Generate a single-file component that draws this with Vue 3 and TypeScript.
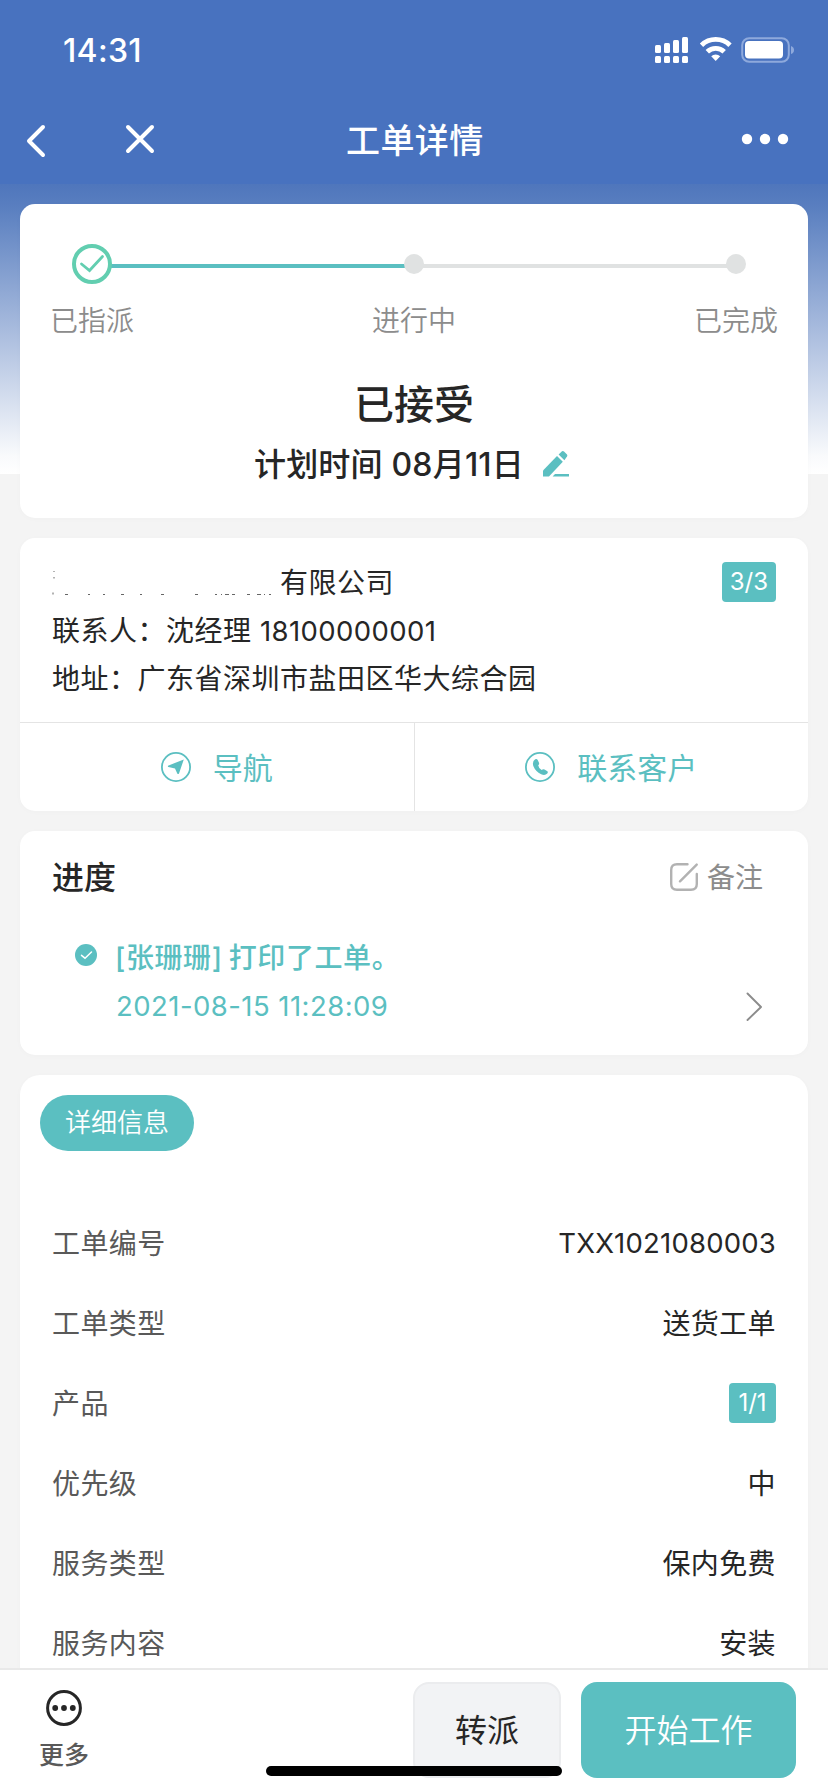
<script setup lang="ts">
interface Step {
  label: string
  done: boolean
}
interface DetailRow {
  label: string
  value: string
  kind?: 'tag' | 'code'
}

const steps: Step[] = [
  { label: '已指派', done: true },
  { label: '进行中', done: false },
  { label: '已完成', done: false },
]

const rows: DetailRow[] = [
  { label: '工单编号', value: 'TXX1021080003', kind: 'code' },
  { label: '工单类型', value: '送货工单' },
  { label: '产品', value: '1/1', kind: 'tag' },
  { label: '优先级', value: '中' },
  { label: '服务类型', value: '保内免费' },
  { label: '服务内容', value: '安装' },
]
</script>

<template>
  <div class="screen">
    <header class="top">
      <div class="status">
        <span class="clock">14:31</span>
        <svg class="status-icons" width="142" height="28" viewBox="0 0 142 28" fill="#fff">
          <rect x="0" y="9" width="6" height="8" rx="1.5" />
          <rect x="9" y="7" width="6" height="10" rx="1.5" />
          <rect x="18" y="4" width="6" height="13" rx="1.5" />
          <rect x="27" y="1" width="6" height="16" rx="1.5" />
          <rect x="0" y="20" width="6" height="7" rx="1.5" />
          <rect x="9" y="20" width="6" height="7" rx="1.5" />
          <rect x="18" y="20" width="6" height="7" rx="1.5" />
          <rect x="27" y="20" width="6" height="7" rx="1.5" />
          <g fill="none" stroke="#fff" stroke-width="4.8">
            <path d="M46.500 9.200 A20.500 20.500 0 0 1 75 9.200" />
            <path d="M52.300 15.800 A12 12 0 0 1 69.200 15.800" />
          </g>
          <path d="M56.200 20.200 A6.500 6.500 0 0 1 65.200 20.200 L60.700 25 Z" />
          <rect x="87.200" y="2.200" width="46.600" height="23.600" rx="7" fill="none" stroke="#8ea9dc" stroke-width="2" />
          <rect x="90" y="5" width="38" height="17.500" rx="4" />
          <path d="M136 10 Q139 11 139 14 Q139 17 136 18 Z" fill="#8ea9dc" />
        </svg>
      </div>
      <nav class="nav">
        <svg class="back" width="22" height="36" viewBox="0 0 22 36" fill="none" stroke="#fff" stroke-width="4" stroke-linecap="round" stroke-linejoin="round">
          <path d="M18 4 L4 18 L18 32" />
        </svg>
        <svg class="close" width="32" height="32" viewBox="0 0 32 32" fill="none" stroke="#fff" stroke-width="4" stroke-linecap="round">
          <path d="M4 4 L28 28 M28 4 L4 28" />
        </svg>
        <h1 class="nav-title">工单详情</h1>
        <svg class="dots" width="48" height="12" viewBox="0 0 48 12" fill="#fff">
          <circle cx="6" cy="6" r="5.200" />
          <circle cx="24" cy="6" r="5.200" />
          <circle cx="42" cy="6" r="5.200" />
        </svg>
      </nav>
    </header>

    <main class="body">
      <section class="card summary">
        <ol class="steps">
          <li v-for="(s, i) in steps" :key="s.label" class="step">
            <span v-if="i < steps.length - 1" class="track" :class="{ active: s.done }"></span>
            <span class="marker">
              <svg v-if="s.done" width="40" height="40" viewBox="0 0 40 40" fill="none" stroke="#62ceb0">
                <circle cx="20" cy="20" r="18" fill="#fff" stroke-width="4" />
                <path d="M9.500 20 L17.500 26.500 L30.500 12.500" stroke-width="2.800" stroke-linecap="round" />
              </svg>
              <i v-else class="dot"></i>
            </span>
            <span class="step-label">{{ s.label }}</span>
          </li>
        </ol>
        <h2 class="state">已接受</h2>
        <div class="plan">
          <span>计划时间 08月11日</span>
          <svg width="28" height="28" viewBox="0 0 28 28" fill="#5bbfc1">
            <path d="M1 26.500 V20.500 L15 6 L20.800 11.800 L7 26.500 Z" />
            <path d="M16.600 4.400 L20 1.200 Q21 .5 22 1.400 L25 4.600 Q25.700 5.600 25 6.600 L22.400 10.200 Z" />
            <path d="M13 24 H27 V26.500 H10.600 Z" />
          </svg>
        </div>
      </section>

      <section class="card customer">
        <div class="customer-info">
          <div class="line company">
            <span class="company-name">
              <svg class="masked" width="228" height="30" viewBox="0 0 228 30" stroke="#666" stroke-width="1">
                <path d="M2 3 v1 M2 9 v1.500" />
                <path d="M1 24.500 v2 M13 26.500 h3 M36 26.500 h2 M51 26.500 h2 M69 26.500 h3 M88 26.500 h2 M109 26.500 h3 M143 26.500 h3 M163 26.500 h2 M169 26.500 h1 M173 26.500 h4 M180 26.500 h3 M195 26.500 h3 M205 26.500 h4 M212 26.500 h1 M217 26.500 h2" />
              </svg>
              <span>有限公司</span>
            </span>
            <span class="tag">3/3</span>
          </div>
          <div class="line">联系人：沈经理 <span class="phone">18100000001</span></div>
          <div class="line">地址：广东省深圳市盐田区华大综合园</div>
        </div>
        <div class="actions">
          <button class="action" type="button">
            <svg width="30" height="30" viewBox="0 0 30 30">
              <circle cx="15" cy="15" r="14.100" fill="none" stroke="#5bbfc1" stroke-width="1.800" />
              <path d="M22.800 7.400 L7 13.700 Q6.600 14.500 7.400 14.900 L14 16.500 L16.400 21.800 Q17.200 22.500 18 21.600 Z" fill="#5bbfc1" />
            </svg>
            <span>导航</span>
          </button>
          <button class="action" type="button">
            <svg width="30" height="30" viewBox="0 0 30 30">
              <circle cx="15" cy="15" r="14.100" fill="none" stroke="#5bbfc1" stroke-width="1.800" />
              <path d="M10.200 7.300 Q11.800 6.400 12.700 8 L14 10.700 Q14.600 12 13.200 13.200 Q13.500 16 16.600 17.900 Q18.300 16.700 19.500 17.600 L22 19 Q23.500 20 22.300 21.500 Q20 24 16.200 22.300 Q10.500 19.500 8.300 14 Q7 9.500 10.200 7.300 Z" fill="#5bbfc1" />
            </svg>
            <span>联系客户</span>
          </button>
        </div>
      </section>

      <section class="card progress">
        <div class="progress-head">
          <h3 class="progress-title">进度</h3>
          <span class="remark">
            <svg width="28" height="28" viewBox="0 0 28 28" fill="none" stroke="#b2b2b2" stroke-width="2.400" stroke-linecap="round">
              <path d="M17.500 1.300 H7 Q1.200 1.300 1.200 7 V21 Q1.200 26.800 7 26.800 H21 Q26.800 26.800 26.800 21 V11" />
              <path d="M10 18.300 L26.700 1.600" />
            </svg>
            <span>备注</span>
          </span>
        </div>
        <div class="event">
          <svg class="event-dot" width="22" height="22" viewBox="0 0 22 22">
            <circle cx="11" cy="11" r="11" fill="#5bbfc1" />
            <path d="M6.500 11.300 L10 14.200 L16.500 8" fill="none" stroke="#fff" stroke-width="1.500" stroke-linecap="round" />
          </svg>
          <div class="event-body">
            <div class="event-text">[张珊珊] 打印了工单。</div>
            <div class="event-time">2021-08-15 11:28:09</div>
          </div>
          <svg class="chevron" width="17" height="30" viewBox="0 0 17 30" fill="none" stroke="#8c8c8c" stroke-width="1.900" stroke-linecap="round" stroke-linejoin="round">
            <path d="M1.500 1.500 L15 15 L1.500 28" />
          </svg>
        </div>
      </section>

      <section class="card details">
        <span class="pill">详细信息</span>
        <dl class="rows">
          <div v-for="r in rows" :key="r.label" class="row">
            <dt>{{ r.label }}</dt>
            <dd :class="r.kind">{{ r.value }}</dd>
          </div>
        </dl>
      </section>
    </main>

    <footer class="bar">
      <div class="more">
        <svg width="36" height="36" viewBox="0 0 36 36" fill="#262626">
          <circle cx="18" cy="18" r="16.400" fill="none" stroke="#262626" stroke-width="3" />
          <circle cx="9.200" cy="18" r="2.900" />
          <circle cx="18" cy="18" r="2.900" />
          <circle cx="26.800" cy="18" r="2.900" />
        </svg>
        <span>更多</span>
      </div>
      <button class="btn plain" type="button">转派</button>
      <button class="btn primary" type="button">开始工作</button>
      <i class="home"></i>
    </footer>
  </div>
</template>

<style>
html,
body {
  margin: 0;
  background: #f4f4f4;
}
</style>

<style scoped>
.screen {
  position: relative;
  display: flex;
  flex-direction: column;
  width: 828px;
  height: 1792px;
  overflow: hidden;
  background: #f4f4f4;
  color: #262626;
  font-family: Inter, 'Noto Sans CJK SC', sans-serif;
  font-size: 28px;
}
h1,
h2,
h3,
ol,
dl,
dd {
  margin: 0;
  padding: 0;
}
svg {
  display: block;
  flex: none;
}
button {
  border: 0;
  padding: 0;
  background: none;
  font: inherit;
  color: inherit;
}
.top {
  flex: none;
  height: 184px;
  background: #4872bf;
  color: #fff;
}
.status {
  display: flex;
  justify-content: space-between;
  align-items: center;
  height: 100px;
  padding: 0 31px 0 63px;
}
.clock {
  font-size: 32px;
  font-weight: 550;
  letter-spacing: 0.3px;
}
.nav {
  display: flex;
  align-items: center;
  height: 80px;
  padding: 0 39px 0 25px;
}
.back {
  margin-top: 2px;
}
.close {
  margin-left: 77px;
  margin-top: -2px;
}
.nav-title {
  margin: 0 auto 0 190px;
  padding-top: 1px;
  font-size: 34px;
  line-height: 44px;
  font-weight: 500;
  letter-spacing: 0.4px;
}
.dots {
  margin-top: -2px;
}
.body {
  flex: 1;
  min-height: 0;
  overflow: hidden;
  display: flex;
  flex-direction: column;
  gap: 20px;
  padding: 20px 20px 0;
  background: linear-gradient(#4f76bc 0, #5a7fc0 24px, #f9fafc 272px, #fff 290px) top / 100% 290px no-repeat;
}
.card {
  flex: none;
  box-sizing: border-box;
  border-radius: 15px;
  background: #fff;
  box-shadow: 0 1px 6px rgba(0, 0, 0, 0.02);
}
.summary {
  height: 314px;
  padding-top: 40px;
}
.steps {
  display: flex;
  justify-content: space-between;
  padding: 0 22px;
  list-style: none;
}
.step {
  position: relative;
  width: 100px;
  display: flex;
  flex-direction: column;
  align-items: center;
}
.track {
  position: absolute;
  left: 50px;
  top: 20px;
  width: 322px;
  height: 4px;
  background: #e0e2e2;
}
.track.active {
  background: #5bbfc1;
}
.marker {
  position: relative;
  z-index: 1;
  display: flex;
  align-items: center;
  height: 40px;
}
.dot {
  width: 20px;
  height: 20px;
  border-radius: 50%;
  background: #e0e2e2;
}
.step-label {
  margin-top: 17px;
  line-height: 40px;
  color: #8c8c8c;
  font-weight: 350;
  white-space: nowrap;
}
.state {
  margin-top: 39px;
  text-align: center;
  font-size: 40px;
  line-height: 50px;
  font-weight: 500;
}
.plan {
  display: flex;
  align-items: center;
  justify-content: center;
  gap: 18px;
  margin-top: 13px;
  padding-right: 4px;
  height: 42px;
  font-size: 32px;
  line-height: 42px;
  font-weight: 500;
  letter-spacing: 0.2px;
}
.plan span {
  padding-top: 1px;
}
.customer {
  height: 273px;
}
.customer-info {
  box-sizing: border-box;
  height: 185px;
  padding: 21px 32px 0;
  border-bottom: 1px solid #e4e4e4;
}
.line {
  height: 48px;
  line-height: 48px;
  letter-spacing: 0.5px;
  white-space: nowrap;
}
.phone {
  font-size: 27.500px;
  letter-spacing: 0.4px;
}
.company {
  display: flex;
  justify-content: space-between;
}
.company-name {
  display: flex;
  align-items: center;
}
.tag {
  box-sizing: border-box;
  height: 40px;
  padding: 0 8px;
  border-radius: 4px;
  background: #5bbfc1;
  color: #fff;
  font-size: 24px;
  line-height: 40px;
  letter-spacing: 0;
}
.company .tag {
  margin-top: 3px;
}
.actions {
  display: flex;
  height: 88px;
}
.action {
  flex: 1;
  display: flex;
  align-items: center;
  justify-content: center;
  gap: 22px;
  color: #5bbfc1;
  font-size: 30px;
}
.action span {
  padding-bottom: 2px;
}
.action + .action {
  border-left: 1px solid #e4e4e4;
}
.progress {
  height: 224px;
  padding: 24px 45px 0 32px;
}
.progress-head {
  display: flex;
  align-items: center;
  justify-content: space-between;
  height: 44px;
}
.progress-title {
  padding-top: 2px;
  font-size: 32px;
  line-height: 44px;
  font-weight: 500;
}
.remark {
  display: flex;
  align-items: center;
  gap: 9px;
  color: #8c8c8c;
  line-height: 44px;
}
.remark span {
  padding-top: 2px;
}
.event {
  display: flex;
  margin-top: 34px;
  padding-left: 23px;
  color: #5bbfc1;
}
.event-dot {
  margin-top: 11px;
}
.event-body {
  flex: 1;
  margin-left: 18px;
  padding-top: 1px;
}
.event-text,
.event-time {
  height: 48px;
  line-height: 48px;
  white-space: nowrap;
}
.event-text {
  font-weight: 500;
  letter-spacing: 0.6px;
  word-spacing: -2px;
}
.event-time {
  padding-left: 1px;
  font-size: 27.500px;
  letter-spacing: 0.45px;
}
.chevron {
  margin-top: 59px;
}
.details {
  height: 700px;
  padding: 20px 32px 0;
  border-radius: 20px;
}
.pill {
  display: block;
  box-sizing: border-box;
  width: 154px;
  height: 56px;
  margin-left: -12px;
  border-radius: 28px;
  background: #5bbfc1;
  color: #fff;
  font-size: 26px;
  line-height: 55px;
  font-weight: 350;
  text-align: center;
}
.rows {
  margin-top: 51px;
}
.row {
  display: flex;
  align-items: center;
  justify-content: space-between;
  height: 80px;
  letter-spacing: 0.4px;
}
.row dt {
  color: #595959;
}
.row dd.tag {
  min-width: 47px;
  margin-top: 2px;
  letter-spacing: 0;
  text-align: center;
}
.row dd.code {
  padding-top: 2px;
  font-size: 27.500px;
  letter-spacing: 0.2px;
}
.bar {
  position: relative;
  z-index: 2;
  flex: none;
  box-sizing: border-box;
  display: flex;
  align-items: flex-start;
  height: 124px;
  padding: 12px 32px 0 39px;
  border-top: 2px solid #e9e9e9;
  background: #fff;
}
.more {
  display: flex;
  flex-direction: column;
  align-items: center;
  width: 50px;
  margin-right: auto;
  padding-top: 8px;
  color: #595959;
  font-size: 25px;
  font-weight: 500;
}
.more span {
  margin-top: 11px;
  line-height: 36px;
  white-space: nowrap;
}
.btn {
  box-sizing: border-box;
  height: 96px;
  padding-bottom: 4px;
  border-radius: 16px;
  font-size: 32px;
}
.plain {
  width: 148px;
  margin-right: 20px;
  border: 2px solid #ebecee;
  background: #f2f3f5;
}
.primary {
  width: 215px;
  background: #5bbfc1;
  color: #fff;
  font-weight: 350;
}
.home {
  position: absolute;
  left: 266px;
  top: 96px;
  width: 296px;
  height: 10px;
  border-radius: 5px;
  background: #000;
}
</style>
